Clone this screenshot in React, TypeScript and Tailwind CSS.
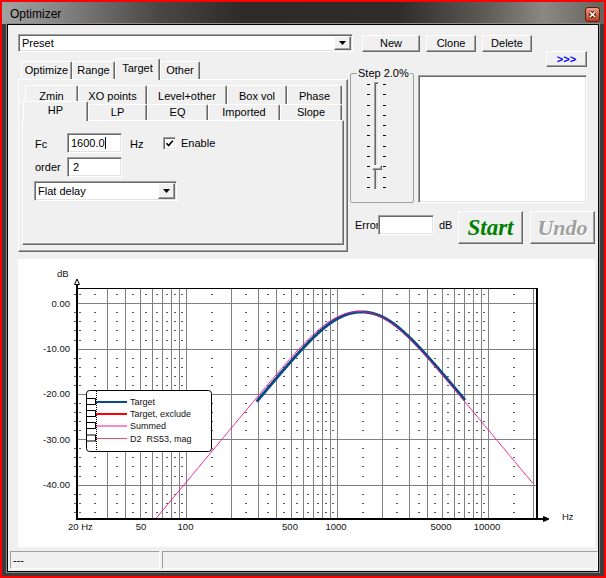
import React from "react";

const raised =
  "border border-t-white border-l-white border-r-[#696969] border-b-[#696969] bg-[#f0f0f0] shadow-[inset_-1px_-1px_0_#a0a0a0]";
const sunken =
  "border border-t-[#a0a0a0] border-l-[#a0a0a0] border-r-white border-b-white bg-white shadow-[inset_1px_1px_0_#696969,inset_-1px_-1px_0_#e3e3e3]";
const tabBase =
  "flex shrink-0 items-center justify-center rounded-t-[2px] border-l border-t border-r border-l-white border-t-white border-r-[#696969] bg-[#f0f0f0] shadow-[inset_-1px_0_0_#a0a0a0]";

type TabDef = { label: string; w: string; active?: boolean };

const outerTabs: TabDef[] = [
  { label: "Optimize", w: "w-[51px]" },
  { label: "Range", w: "w-[43px]" },
  { label: "Target", w: "w-[45px]", active: true },
  { label: "Other", w: "w-[40px]" }
];

const backTabs: TabDef[] = [
  { label: "Zmin", w: "w-[53px]" },
  { label: "XO points", w: "w-[69px]" },
  { label: "Level+other", w: "w-[80px]" },
  { label: "Box vol", w: "w-[60px]" },
  { label: "Phase", w: "w-[55px]" }
];

const frontTabs: TabDef[] = [
  { label: "HP", w: "w-[65px]", active: true },
  { label: "LP", w: "w-[59px]" },
  { label: "EQ", w: "w-[61px]" },
  { label: "Imported", w: "w-[72px]" },
  { label: "Slope", w: "w-[62px]" }
];

function DropArrow() {
  return (
    <div className={`${raised} flex h-full w-[17px] shrink-0 items-center justify-center`}>
      <svg width="7" height="4" viewBox="0 0 7 4">
        <polygon points="0,0 7,0 3.5,4" fill="#000" />
      </svg>
    </div>
  );
}

function Combo({ text, className }: { text: string; className: string }) {
  return (
    <div className={`${sunken} flex items-stretch p-px ${className}`}>
      <span className="flex flex-1 items-center pl-[2px]">{text}</span>
      <DropArrow />
    </div>
  );
}

// ---- chart helpers ----
const fx = (f: number) => 185.5 + 151 * (Math.log10(f) - 2);
const dy = (db: number) => 303.3 - db * 4.533;

const lineFreqs: number[] = [];
for (const dec of [10, 100, 1000]) {
  for (let k = dec === 10 ? 3 : 1; k <= 9; k++) lineFreqs.push(k * dec);
}
lineFreqs.push(10000, 20000);

const dotFreqs: number[] = [20, 150, 1500, 15000];
for (const dec of [10, 100, 1000]) {
  for (let k = 2; k <= 9; k++) dotFreqs.push((k + 0.5) * dec);
}

const minorDb: number[] = [];
for (let db = 2; db >= -46; db -= 2) if (db % 10 !== 0) minorDb.push(db);

const bandpass = (f: number, f1: number, f2: number) => {
  const a = (f / f1) ** 2;
  const b = (f / f2) ** 2;
  return 20 * Math.log10(a / Math.sqrt(1 + a * a) / Math.sqrt(1 + b * b));
};

function curve(from: number, to: number, f1: number, f2: number) {
  const pts: string[] = [];
  const n = 400;
  for (let i = 0; i <= n; i++) {
    const f = from * Math.pow(to / from, i / n);
    pts.push(`${fx(f).toFixed(1)},${dy(bandpass(f, f1, f2)).toFixed(1)}`);
  }
  return pts.join(" ");
}

function Chart() {
  const font = "Liberation Sans, Arial, sans-serif";
  const yLabels = [0, -10, -20, -30, -40];
  const xLabels: [string, number][] = [
    ["50", 141],
    ["100", 185.5],
    ["500", 290],
    ["1000", 336],
    ["5000", 441],
    ["10000", 487]
  ];
  const legend: [string, string, number, number][] = [
    ["Target", "#0b4a86", 2, 402],
    ["Target, exclude", "#ff0000", 2, 414],
    ["Summed", "#f0188c", 1, 426],
    ["D2  RS53, mag", "#e85060", 1, 438.5]
  ];

  return (
    <svg width="577" height="288" viewBox="18 259 577 288" className="block">
      <defs>
        <clipPath id="plot">
          <rect x="77" y="288" width="460" height="231" />
        </clipPath>
      </defs>

      {/* grid */}
      <g stroke="#808080" strokeWidth="1" shapeRendering="crispEdges">
        {lineFreqs.map((f) => {
          const x = Math.round(fx(f)) + 0.5;
          return <line key={f} x1={x} x2={x} y1={288} y2={519} />;
        })}
        {yLabels.map((db) => {
          const y = Math.round(dy(db)) + 0.5;
          return <line key={db} x1={77} x2={537} y1={y} y2={y} />;
        })}
      </g>
      <g fill="#5a5a5a" shapeRendering="crispEdges">
        {dotFreqs.map((f) =>
          minorDb.map((db) => (
            <rect
              key={`${f}-${db}`}
              x={Math.round(fx(f)) - 1}
              y={Math.round(dy(db))}
              width="2"
              height="1"
            />
          ))
        )}
        {minorDb.map((db) => (
          <rect key={`t${db}`} x={74} y={Math.round(dy(db))} width="3" height="1" />
        ))}
      </g>

      {/* curves */}
      <g clipPath="url(#plot)" fill="none">
        <polyline points={curve(296, 7100, 1030, 2080)} stroke="#0b4a86" strokeWidth="3" />
        <polyline points={curve(55, 20000, 980, 2030)} stroke="#f0188c" strokeWidth="1" />
      </g>

      {/* axes */}
      <g stroke="#000" shapeRendering="crispEdges" fill="none">
        <line x1="77" x2="537" y1="288.5" y2="288.5" strokeWidth="1" />
        <line x1="537" x2="537" y1="288" y2="520" strokeWidth="2" />
        <line x1="77" x2="77" y1="280" y2="520" strokeWidth="2" />
        <line x1="76" x2="544" y1="519" y2="519" strokeWidth="2" />
      </g>
      <polygon points="74.5,284.5 77,279 79.5,284.5" fill="#fff" stroke="#000" strokeWidth="1" />
      <polygon points="543.5,516.5 549,519 543.5,521.5" fill="#000" stroke="#000" strokeWidth="1" />

      {/* labels */}
      <g fontFamily={font} fontSize="9.5" fill="#111">
        <text x="57" y="277">dB</text>
        <text x="562" y="519.5">Hz</text>
        {yLabels.map((db) => (
          <text key={db} x="70" y={dy(db) + 3.4} textAnchor="end">
            {db === 0 ? "0.00" : `${db}.00`}
          </text>
        ))}
        <text x="68" y="529.5">20 Hz</text>
        {xLabels.map(([t, x]) => (
          <text key={t} x={x} y="529.5" textAnchor="middle">
            {t}
          </text>
        ))}
      </g>

      {/* legend */}
      <rect x="86.5" y="390.5" width="125" height="61" rx="3" fill="#fff" stroke="#000" />
      <line x1="96.5" x2="96.5" y1="391" y2="451" stroke="#000" strokeDasharray="1 1" />
      {legend.map(([label, color, w, y]) => (
        <g key={label}>
          <rect x="86.5" y={y - 3.5} width="9" height="6" fill="#fff" stroke="#000" />
          <line x1="96" x2="127" y1={y} y2={y} stroke={color} strokeWidth={w} />
          <text
            x="130"
            y={y + 3.3}
            fontFamily={font}
            fontSize="9"
            fill="#111"
            style={{ whiteSpace: "pre" }}
          >
            {label}
          </text>
        </g>
      ))}
    </svg>
  );
}

export default function App() {
  return (
    <div className="h-[578px] w-[606px] border-2 border-[#ff0000] bg-[#3c3c3c] font-['Liberation_Sans',Arial,sans-serif] text-[11px] leading-none text-black">
      {/* title bar */}
      <div className="flex h-[22px] items-start bg-[linear-gradient(90deg,#a2a2a2_0%,#8a8a8a_8%,#4a4744_26%,#2d2a27_40%,#2f2c29_66%,#5d5a56_80%,#8b8884_90%,#66635f_100%)] pl-[8px] pr-[4px]">
        <span className="mt-[6px] text-[12px]">Optimizer</span>
        <div className="ml-auto mt-[5px] flex h-[15px] w-[15px] items-center justify-center rounded-[3px] border border-[#5e1d0c] bg-[linear-gradient(180deg,#eea08a_0%,#d4684a_50%,#b83d1e_100%)]">
          <svg width="11" height="11" viewBox="0 0 11 11">
            <path d="M3 3 L8 8 M8 3 L3 8" stroke="#4a1508" strokeWidth="3.4" />
            <path d="M3 3 L8 8 M8 3 L3 8" stroke="#fff" strokeWidth="1.7" />
          </svg>
        </div>
      </div>

      {/* client */}
      <div className="mx-[5px] h-[548px] w-[592px] border border-black bg-[#f0f0f0] shadow-[0_0_0_1px_#8c8c8c]">
        <div className="flex h-[546px] w-[590px] flex-col">
          {/* preset row */}
          <div className="ml-[10px] mt-[9px] flex h-[18px] items-start">
            <Combo text="Preset" className="h-[18px] w-[335px]" />
            <button className={`${raised} ml-[9px] mt-px h-[17px] w-[58px]`}>New</button>
            <button className={`${raised} ml-[6px] mt-px h-[17px] w-[50px]`}>Clone</button>
            <button className={`${raised} ml-[6px] mt-px h-[17px] w-[50px]`}>Delete</button>
          </div>

          {/* main row */}
          <div className="-mt-px ml-[10px] flex h-[201px]">
            {/* left: tabs */}
            <div className="flex w-[330px] flex-col pt-[7px]">
              <div className="flex h-[21px] items-end pl-[3px]">
                {outerTabs.map((t) => (
                  <div
                    key={t.label}
                    className={`${tabBase} ${t.w} ${
                      t.active ? "relative z-10 -mb-px h-[22px] pb-[3px]" : "h-[18px]"
                    }`}
                  >
                    {t.label}
                  </div>
                ))}
              </div>
              <div className={`${raised} h-[173px] w-[330px]`}>
                <div className="pt-[5px]">
                  <div className="flex h-[19px] pl-[6px]">
                    {backTabs.map((t) => (
                      <div key={t.label} className={`${tabBase} ${t.w} h-[19px] items-start pt-[5px]`}>
                        {t.label}
                      </div>
                    ))}
                  </div>
                  <div className="relative z-10 -mt-[3px] flex h-[19px] items-end pl-[4px]">
                    {frontTabs.map((t) => (
                      <div
                        key={t.label}
                        className={`${tabBase} ${t.w} ${
                          t.active ? "relative z-10 -mb-px h-[20px] pb-[2px]" : "h-[16px]"
                        }`}
                      >
                        {t.label}
                      </div>
                    ))}
                  </div>
                  <div className={`${raised} ml-[3px] h-[125px] w-[322px]`}>
                    <div className="pl-[12px] pt-[12px]">
                      <div className="flex h-[20px] items-center">
                        <span className="w-[32px] pt-[2px]">Fc</span>
                        <div className={`${sunken} flex h-[20px] w-[55px] items-center pl-[3px]`}>
                          1600.0
                          <span className="h-[12px] w-px bg-black" />
                        </div>
                        <span className="ml-[8px] w-[33px] pt-[2px]">Hz</span>
                        <div className={`${sunken} flex h-[13px] w-[13px] items-center justify-center`}>
                          <svg width="9" height="9" viewBox="0 0 9 9">
                            <path d="M1.5 4.2 L3.6 6.5 L7.8 1.8" stroke="#000" strokeWidth="1.7" fill="none" />
                          </svg>
                        </div>
                        <span className="ml-[5px]">Enable</span>
                      </div>
                      <div className="mt-[4px] flex h-[20px] items-center">
                        <span className="w-[32px]">order</span>
                        <div className={`${sunken} flex h-[20px] w-[55px] items-center pl-[5px]`}>2</div>
                      </div>
                      <Combo text="Flat delay" className="-ml-px mt-[4px] h-[20px] w-[143px]" />
                    </div>
                  </div>
                </div>
              </div>
            </div>

            {/* right column */}
            <div className="ml-[2px] flex w-[245px] flex-col">
              <button
                className={`${raised} ml-[196px] h-[16px] w-[41px] font-bold text-[#0000ff]`}
              >
                &gt;&gt;&gt;
              </button>
              <div className="flex items-end">
                <fieldset className="h-[136px] w-[64px] shrink-0 rounded-[2px] border border-[#a0a0a0]">
                  <legend className="ml-[6px] px-px text-[11px] leading-[12px]">Step 2.0%</legend>
                  <div className="ml-[16px] mt-[3px] flex h-[108px]">
                    <div className="mt-[2px] flex h-[104px] w-[3px] flex-col justify-between">
                      {Array.from({ length: 11 }).map((_, i) => (
                        <div key={i} className="h-px w-[3px] bg-black" />
                      ))}
                    </div>
                    <div className="relative ml-[4px] h-[108px] w-[5px] border border-t-[#a0a0a0] border-l-[#a0a0a0] border-r-white border-b-white bg-[#e6e6e6] shadow-[inset_1px_1px_0_#696969]">
                      <div className={`${raised} absolute left-[-3px] top-[82px] h-[5px] w-[10px]`} />
                    </div>
                    <div className="ml-[4px] mt-[2px] flex h-[104px] w-[3px] flex-col justify-between">
                      {Array.from({ length: 11 }).map((_, i) => (
                        <div key={i} className="h-px w-[3px] bg-black" />
                      ))}
                    </div>
                  </div>
                </fieldset>
                <div className={`${sunken} ml-[4px] h-[128px] w-[169px]`} />
              </div>
              <div className="mt-[8px] flex h-[33px] items-start">
                <span className="mt-[4px] flex h-[20px] w-[28px] items-center pl-[5px]">Error</span>
                <div className={`${sunken} mt-[4px] h-[20px] w-[56px]`} />
                <span className="mt-[4px] flex h-[20px] w-[24px] items-center pl-[5px]">dB</span>
                <button
                  className={`${raised} flex h-[33px] w-[65px] items-center justify-center font-['Liberation_Serif',serif] text-[23px] font-bold italic text-[#008000]`}
                >
                  Start
                </button>
                <button
                  className={`${raised} ml-[7px] flex h-[33px] w-[65px] items-center justify-center font-['Liberation_Serif',serif] text-[22px] font-bold italic text-[#a0a0a0] [text-shadow:1px_1px_0_#fff]`}
                >
                  Undo
                </button>
              </div>
            </div>
          </div>

          {/* chart */}
          <div className="ml-[10px] mt-[7px] h-[288px] w-[577px] bg-white">
            <Chart />
          </div>

          {/* status bar */}
          <div className="ml-[2px] mt-[4px] flex h-[18px] gap-[2px]">
            <div className="flex h-[18px] w-[150px] items-center border border-t-[#a0a0a0] border-l-[#a0a0a0] border-r-white border-b-white pl-[2px]">
              ---
            </div>
            <div className="h-[18px] w-[436px] border border-t-[#a0a0a0] border-l-[#a0a0a0] border-r-white border-b-white" />
          </div>
        </div>
      </div>
    </div>
  );
}
